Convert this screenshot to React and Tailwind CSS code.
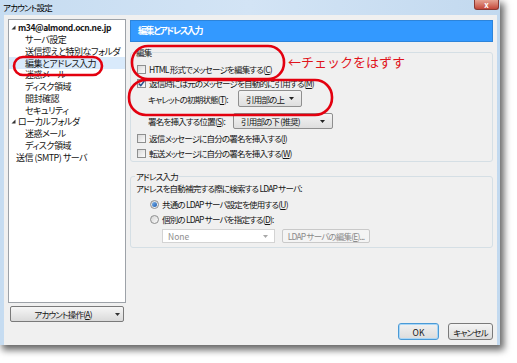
import React from 'react';

const tree = [
  { t: 'm34@almond.ocn.ne.jp', tri: true, bold: true },
  { t: 'サーバ設定', child: true },
  { t: '送信控えと特別なフォルダ', child: true },
  { t: '編集とアドレス入力', child: true, sel: true },
  { t: '迷惑メール', child: true },
  { t: 'ディスク領域', child: true },
  { t: '開封確認', child: true },
  { t: 'セキュリティ', child: true },
  { t: 'ローカルフォルダ', tri: true },
  { t: '迷惑メール', child: true },
  { t: 'ディスク領域', child: true },
  { t: '送信 (SMTP) サーバ' },
];

// access key with underline
const K = ({ c }) => <span className="underline underline-offset-1">{c}</span>;

const Tri = () => (
  <svg width="5" height="5" viewBox="0 0 5 5" className="shrink-0">
    <path d="M4.5 0.5 L4.5 4.5 L0.5 4.5 Z" fill="#333" />
  </svg>
);

const Arrow = ({ color = '#222' }) => (
  <svg width="5" height="3" viewBox="0 0 5 3" className="shrink-0">
    <path d="M0 0 L5 0 L2.5 3 Z" fill={color} />
  </svg>
);

const Check = ({ checked }) => (
  <span className="w-[9px] h-[9px] border border-[#8e8f8f] bg-linear-to-br from-[#d9d9d9] to-[#fbfbfb] flex items-center justify-center shrink-0">
    {checked && (
      <svg width="7" height="7" viewBox="0 0 7 7">
        <path d="M0.8 3.6 L2.8 5.6 L6.3 1" stroke="#264f8f" strokeWidth="1.5" fill="none" />
      </svg>
    )}
  </span>
);

const Radio = ({ checked }) => (
  <span className="w-[9px] h-[9px] rounded-full border border-[#8e8f8f] bg-linear-to-br from-[#d6d6d6] to-[#fbfbfb] flex items-center justify-center shrink-0">
    {checked && <span className="w-[5px] h-[5px] rounded-full bg-linear-to-br from-[#7fb6ee] to-[#1b5cae]" />}
  </span>
);

const App = () => {
  return (
    <div className="relative w-[517px] h-[363px] bg-white overflow-hidden font-['Noto_Sans_CJK_JP',sans-serif] [font-feature-settings:'palt'] text-[#151515] text-[8.5px] leading-[12px] tracking-[-0.8px] whitespace-nowrap">
      {/* window */}
      <div className="w-[500px] h-[345px] flex flex-col bg-linear-to-r from-[#c6dcf1] via-[#d3e4f5] to-[#c2d9ef] shadow-[3px_4px_7px_1px_rgba(0,0,0,0.6)]">
        <div className="h-[15px] flex justify-between">
          <span className="pl-[3px] pt-[2px] text-[8.5px] leading-[11px] text-black">アカウント設定</span>
          <div className="mr-[1px] w-[25px] h-[10px] rounded-b-[3px] border border-t-0 border-[#8a3a33] bg-linear-to-b from-[#e5a394] to-[#c2463a] flex items-center justify-center text-white text-[8px] leading-[8px] font-bold tracking-normal">x</div>
        </div>

        <div className="flex-1 ml-[4px] mr-[3px] bg-[#f0f0f0] flex">
          {/* left column */}
          <div className="ml-[4px] pt-[4px] w-[118px] flex flex-col">
            <div className="h-[284px] bg-white border border-[#9da2a8] pt-[2px] overflow-hidden">
              {tree.map((n, i) => (
                <div
                  key={i}
                  className={`h-[11.75px] flex items-center gap-[2px] ${n.child ? 'pl-[16px]' : n.tri ? 'pl-[2px]' : 'pl-[7px]'} ${n.sel ? 'bg-[#d9eafb]' : ''}`}
                >
                  {n.tri && <Tri />}
                  <span className={`leading-[11px] ${n.bold ? 'text-[8.5px] font-bold tracking-[-0.4px]' : 'text-[9px] tracking-[-0.5px]'}`}>{n.t}</span>
                </div>
              ))}
            </div>
            <div className="mt-[3px] mx-[2px] h-[16px] rounded-[2px] border border-[#7a7a7a] bg-linear-to-b from-[#f6f6f6] to-[#dadada] flex items-center">
              <span className="flex-1 text-center pl-[4px]">アカウント操作(<K c="A" />)</span>
              <span className="w-[12px] flex justify-center"><Arrow color="#333" /></span>
            </div>
          </div>

          {/* right column */}
          <div className="ml-[4px] w-[363px] pt-[5px] pb-[5px] flex flex-col">
            <div className="h-[22px] bg-[#3399ff] border border-[#2d84da] flex items-center pl-[7px] text-white font-bold text-[9px] tracking-[-1.4px]">
              編集とアドレス入力
            </div>

            <fieldset className="mt-[4px] border border-[#d5dfe5] rounded-[3px] pb-[1px]">
              <legend className="ml-[4px] px-[1px] leading-[12px]">編集</legend>
              <div className="pt-[4px] pl-[6px] h-[18px] flex items-center gap-[3px]">
                <Check />
                <span>HTML 形式でメッセージを編集する(<K c="C" />)</span>
              </div>
              <div className="mt-[0px] pl-[6px] h-[14px] flex items-center gap-[3px]">
                <Check checked />
                <span>返信時には元のメッセージを自動的に引用する(<K c="M" />)</span>
              </div>
              <div className="pl-[17px] h-[17px] flex items-center">
                <span className="w-[90px]">キャレットの初期状態(<K c="T" />):</span>
                <div className="w-[64px] h-[17px] border border-[#8f8f8f] rounded-[2px] bg-linear-to-b from-[#f4f4f4] to-[#dedede] flex items-center justify-between pl-[7px] pr-[7px]">
                  <span>引用部の上</span>
                  <Arrow />
                </div>
              </div>
              <div className="mt-[6px] pl-[17px] h-[16px] flex items-center">
                <span className="w-[85px]">署名を挿入する位置(<K c="S" />):</span>
                <div className="w-[100px] h-[16px] border border-[#8f8f8f] rounded-[2px] bg-linear-to-b from-[#f4f4f4] to-[#dedede] flex items-center justify-between pl-[7px] pr-[7px]">
                  <span>引用部の下 (推奨)</span>
                  <Arrow />
                </div>
              </div>
              <div className="mt-[2px] pl-[6px] h-[14px] flex items-center gap-[3px]">
                <Check />
                <span>返信メッセージに自分の署名を挿入する(<K c="I" />)</span>
              </div>
              <div className="mt-[1px] pl-[6px] h-[14px] flex items-center gap-[3px]">
                <Check />
                <span>転送メッセージに自分の署名を挿入する(<K c="W" />)</span>
              </div>
            </fieldset>

            <fieldset className="mt-[8px] border border-[#d5dfe5] rounded-[3px] pb-[4px]">
              <legend className="ml-[4px] px-[1px] leading-[12px]">アドレス入力</legend>
              <div className="pl-[5px] h-[12px] flex items-center">アドレスを自動補完する際に検索する LDAP サーバ:</div>
              <div className="mt-[3px] pl-[19px] h-[14px] flex items-center gap-[3px]">
                <Radio checked />
                <span>共通の LDAP サーバ設定を使用する(<K c="U" />)</span>
              </div>
              <div className="mt-[1px] pl-[19px] h-[14px] flex items-center gap-[3px]">
                <Radio />
                <span>個別の LDAP サーバを指定する(<K c="D" />):</span>
              </div>
              <div className="mt-[3px] pl-[31px] h-[14px] flex items-center gap-[7px]">
                <div className="w-[113px] h-[14px] border border-[#d3d3d3] bg-white flex items-center justify-between pl-[5px] pr-[6px] text-[#8e8e8e] tracking-normal">
                  <span>None</span>
                  <Arrow color="#a8a8a8" />
                </div>
                <div className="w-[88px] h-[14px] border border-[#c9c9c9] rounded-[2px] bg-[#f4f4f4] flex items-center justify-center text-[#8a8a8a]">
                  LDAP サーバの編集(<K c="E" />)...
                </div>
              </div>
            </fieldset>

            <div className="mt-auto flex justify-end gap-[9px]">
              <div className="w-[41px] h-[17px] rounded-[3px] border border-[#4a9ad6] shadow-[inset_0_0_0_1px_#a8d6f7] bg-linear-to-b from-[#f1f1f1] to-[#dcdcdc] flex items-center justify-center tracking-normal">OK</div>
              <div className="w-[45px] h-[17px] rounded-[3px] border border-[#7a7a7a] bg-linear-to-b from-[#f4f4f4] to-[#dcdcdc] flex items-center justify-center">キャンセル</div>
            </div>
          </div>
        </div>
      </div>

      {/* red annotations */}
      <svg className="absolute left-0 top-0 pointer-events-none" width="517" height="363" viewBox="0 0 517 363">
        <g fill="none" stroke="#e3000f" strokeWidth="2.6">
          <rect x="14" y="57" width="88" height="18" rx="9" />
          <rect x="132" y="46" width="152" height="33" rx="16" />
          <rect x="129" y="80" width="203" height="35" rx="17" />
        </g>
      </svg>
      <div className="absolute left-[288px] top-[54px] text-[13px] leading-[16px] text-[#e0141c] [font-feature-settings:normal] tracking-normal">
        ←チェックをはずす
      </div>
    </div>
  );
};

export default App;
